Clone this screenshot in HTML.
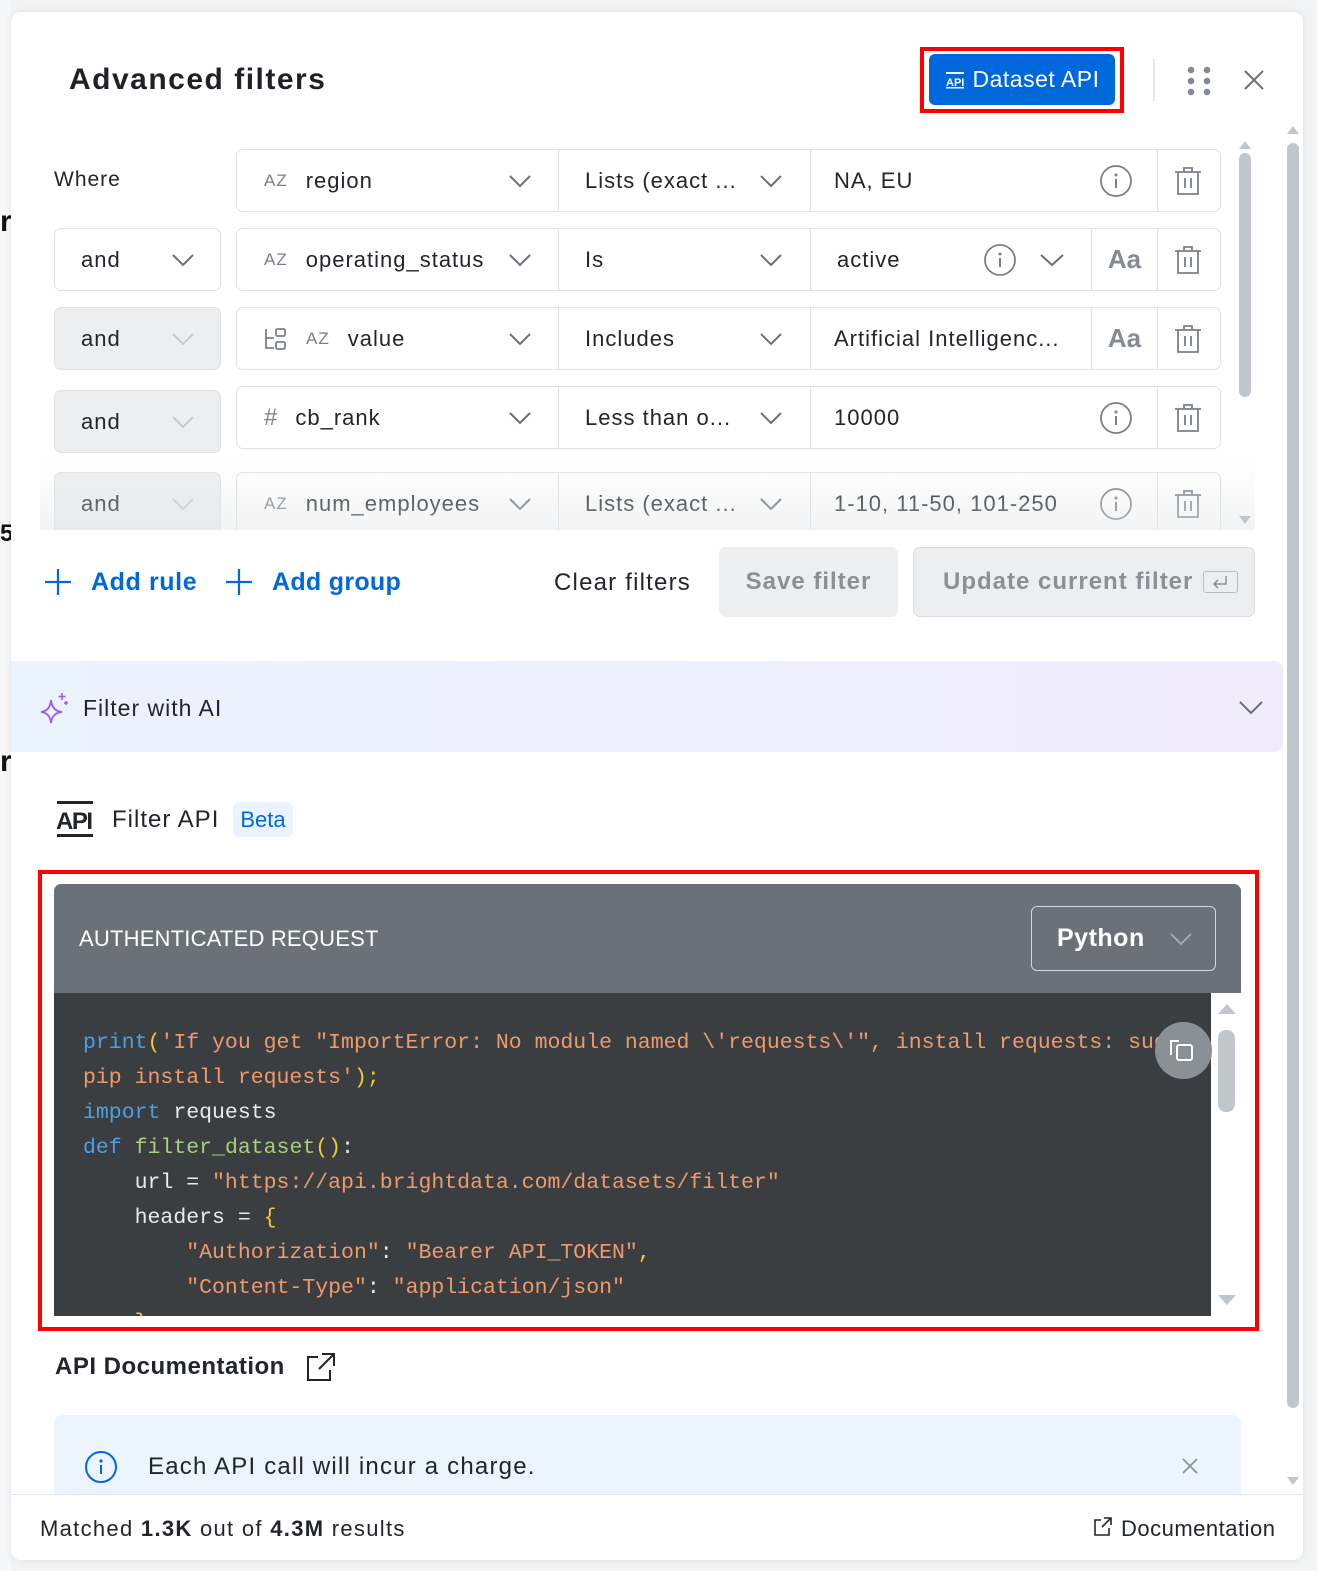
<!DOCTYPE html>
<html><head><meta charset="utf-8">
<style>
*{box-sizing:border-box;margin:0;padding:0}
body{width:1317px;height:1571px;position:relative;overflow:hidden;background:#f2f3f4;font-family:"Liberation Sans",sans-serif;color:#22262a;letter-spacing:1px}
.a{position:absolute}
.modal{left:11px;top:12px;width:1292px;height:1548px;background:#fff;border-radius:10px;box-shadow:0 0 8px rgba(0,0,0,.08);overflow:hidden}
.box{position:absolute;border:1.5px solid #dfe2e5;border-radius:7px;background:#fff}
.gray{background:#eceef0}
.cell{position:absolute;top:0;bottom:0;display:flex;align-items:center;font-size:22px;color:#22262a}
.sep{border-left:1.5px solid #dfe2e5}
.az{font-size:17px;color:#7a8087;letter-spacing:1px;margin-right:18px}
.t{font-size:22px;white-space:nowrap}
.code{font-family:"Liberation Mono",monospace;font-size:21.5px;letter-spacing:0;white-space:pre;color:#e9eaeb;line-height:35px}
.s{color:#ef9a6b}.k{color:#4b9fe6}.f{color:#a8cf7a}.y{color:#f2cb2f}
</style></head><body>
<div class="a" style="left:0;top:0;width:11px;height:1571px;background:#f6f7f8"></div>
<div class="a t" style="left:0;top:205px;font-size:30px;font-weight:bold;color:#111">r</div>
<div class="a t" style="left:0;top:520px;font-size:24px;font-weight:bold;color:#111">5</div>
<div class="a t" style="left:0;top:745px;font-size:30px;font-weight:bold;color:#111">r</div>

<div class="a modal"></div>
<div class="a t" style="left:69px;top:63px;font-size:30px;font-weight:600;color:#1e2226;letter-spacing:1.5px">Advanced filters</div>
<div class="a" style="left:920px;top:47px;width:204px;height:66px;border:4px solid #f00"></div>
<div class="a" style="left:929px;top:54px;width:186px;height:51px;background:#0068dd;border-radius:6px;color:#fff;display:flex;align-items:center;justify-content:center;font-size:23px;letter-spacing:0.5px">
<svg width="20" height="20" viewBox="0 0 20 20" style="margin-right:8px"><rect x="1" y="2" width="18" height="2" fill="#fff"/><text x="1" y="16" font-size="11" font-weight="bold" fill="#fff" font-family="Liberation Sans" letter-spacing="0">API</text><rect x="1" y="17" width="18" height="1.5" fill="#fff"/></svg>Dataset API</div>
<div class="a" style="left:1153px;top:59px;width:2px;height:42px;background:#e3e5e8"></div>
<svg class="a" style="left:1186px;top:66px" width="28" height="30"><g fill="#858b92"><circle cx="5" cy="4" r="3.3"/><circle cx="21" cy="4" r="3.3"/><circle cx="5" cy="15" r="3.3"/><circle cx="21" cy="15" r="3.3"/><circle cx="5" cy="26" r="3.3"/><circle cx="21" cy="26" r="3.3"/></g></svg>
<svg class="a" style="left:1243px;top:69px" width="22" height="22"><path d="M2 2L20 20M20 2L2 20" stroke="#6b7178" stroke-width="2"/></svg>

<div class="a" style="left:40px;top:130px;width:1215px;height:400px;overflow:hidden">
<div class="a" style="left:-40px;top:-130px;width:1317px;height:700px">
<div class="a t" style="left:54px;top:168px;font-size:21px">Where</div>

<div class="box" style="left:54px;top:228px;width:167px;height:63px"></div>
<div class="box gray" style="left:54px;top:307px;width:167px;height:63px"></div>
<div class="box gray" style="left:54px;top:390px;width:167px;height:63px"></div>
<div class="box gray" style="left:54px;top:472px;width:167px;height:63px"></div>
<div class="a t" style="left:81px;top:247px">and</div>
<div class="a t" style="left:81px;top:326px">and</div>
<div class="a t" style="left:81px;top:409px">and</div>
<div class="a t" style="left:81px;top:491px">and</div>
<svg class="a" style="left:171px;top:253px" width="24" height="14"><path d="M2 2L12 12L22 2" fill="none" stroke="#6b7178" stroke-width="2"/></svg>
<svg class="a" style="left:171px;top:332px" width="24" height="14"><path d="M2 2L12 12L22 2" fill="none" stroke="#c6cacf" stroke-width="2"/></svg>
<svg class="a" style="left:171px;top:415px" width="24" height="14"><path d="M2 2L12 12L22 2" fill="none" stroke="#c6cacf" stroke-width="2"/></svg>
<svg class="a" style="left:171px;top:497px" width="24" height="14"><path d="M2 2L12 12L22 2" fill="none" stroke="#c6cacf" stroke-width="2"/></svg>

<div class="box" style="left:236px;top:149px;width:985px;height:63px">
 <div class="cell" style="left:27px"><span class="az">AZ</span>region</div>
 <div class="cell sep" style="left:321px;width:252px;padding-left:26px">Lists (exact ...</div>
 <div class="cell sep" style="left:573px;width:348px;padding-left:23px">NA, EU</div>
 <div class="cell sep" style="left:920px;width:64px"></div>
</div>
<div class="box" style="left:236px;top:228px;width:985px;height:63px">
 <div class="cell" style="left:27px;width:224px;overflow:hidden"><span class="az">AZ</span>operating_status</div>
 <div class="cell sep" style="left:321px;width:252px;padding-left:26px">Is</div>
 <div class="cell sep" style="left:573px;width:282px;padding-left:26px">active</div>
 <div class="cell sep" style="left:854px;width:66px;justify-content:center;font-weight:bold;color:#858b92;font-size:26px;letter-spacing:0">Aa</div>
 <div class="cell sep" style="left:920px;width:64px"></div>
</div>
<div class="box" style="left:236px;top:307px;width:985px;height:63px">
 <div class="cell" style="left:27px"><svg width="24" height="22" style="margin-right:18px"><path d="M2 1V20H10M2 10H10" fill="none" stroke="#7a8087" stroke-width="1.8"/><rect x="12" y="1" width="9" height="7" rx="1.5" fill="none" stroke="#7a8087" stroke-width="1.8"/><rect x="12" y="14" width="9" height="7" rx="1.5" fill="none" stroke="#7a8087" stroke-width="1.8"/></svg><span class="az">AZ</span>value</div>
 <div class="cell sep" style="left:321px;width:252px;padding-left:26px">Includes</div>
 <div class="cell sep" style="left:573px;width:282px;padding-left:23px">Artificial Intelligenc...</div>
 <div class="cell sep" style="left:854px;width:66px;justify-content:center;font-weight:bold;color:#858b92;font-size:26px;letter-spacing:0">Aa</div>
 <div class="cell sep" style="left:920px;width:64px"></div>
</div>
<div class="box" style="left:236px;top:386px;width:985px;height:63px">
 <div class="cell" style="left:27px"><span class="az" style="font-size:24px;letter-spacing:0">#</span>cb_rank</div>
 <div class="cell sep" style="left:321px;width:252px;padding-left:26px">Less than o...</div>
 <div class="cell sep" style="left:573px;width:348px;padding-left:23px">10000</div>
 <div class="cell sep" style="left:920px;width:64px"></div>
</div>
<div class="box" style="left:236px;top:472px;width:985px;height:63px">
 <div class="cell" style="left:27px"><span class="az">AZ</span>num_employees</div>
 <div class="cell sep" style="left:321px;width:252px;padding-left:26px">Lists (exact ...</div>
 <div class="cell sep" style="left:573px;width:348px;padding-left:23px">1-10, 11-50, 101-250</div>
 <div class="cell sep" style="left:920px;width:64px"></div>
</div>

<svg class="a" style="left:508px;top:174px" width="24" height="14"><path d="M2 2L12 12L22 2" fill="none" stroke="#6b7178" stroke-width="2"/></svg>
<svg class="a" style="left:508px;top:253px" width="24" height="14"><path d="M2 2L12 12L22 2" fill="none" stroke="#6b7178" stroke-width="2"/></svg>
<svg class="a" style="left:508px;top:332px" width="24" height="14"><path d="M2 2L12 12L22 2" fill="none" stroke="#6b7178" stroke-width="2"/></svg>
<svg class="a" style="left:508px;top:411px" width="24" height="14"><path d="M2 2L12 12L22 2" fill="none" stroke="#6b7178" stroke-width="2"/></svg>
<svg class="a" style="left:508px;top:497px" width="24" height="14"><path d="M2 2L12 12L22 2" fill="none" stroke="#6b7178" stroke-width="2"/></svg>
<svg class="a" style="left:759px;top:174px" width="24" height="14"><path d="M2 2L12 12L22 2" fill="none" stroke="#6b7178" stroke-width="2"/></svg>
<svg class="a" style="left:759px;top:253px" width="24" height="14"><path d="M2 2L12 12L22 2" fill="none" stroke="#6b7178" stroke-width="2"/></svg>
<svg class="a" style="left:759px;top:332px" width="24" height="14"><path d="M2 2L12 12L22 2" fill="none" stroke="#6b7178" stroke-width="2"/></svg>
<svg class="a" style="left:759px;top:411px" width="24" height="14"><path d="M2 2L12 12L22 2" fill="none" stroke="#6b7178" stroke-width="2"/></svg>
<svg class="a" style="left:759px;top:497px" width="24" height="14"><path d="M2 2L12 12L22 2" fill="none" stroke="#6b7178" stroke-width="2"/></svg>
<svg class="a" style="left:1039px;top:253px" width="26" height="14"><path d="M2 2L13 12L24 2" fill="none" stroke="#6b7178" stroke-width="2"/></svg>

<svg class="a" style="left:1099px;top:164px" width="34" height="34"><circle cx="17" cy="17" r="15" fill="none" stroke="#7a8087" stroke-width="1.8"/><circle cx="17" cy="11" r="1.5" fill="#7a8087"/><path d="M17 15V24" stroke="#7a8087" stroke-width="2"/></svg>
<svg class="a" style="left:983px;top:243px" width="34" height="34"><circle cx="17" cy="17" r="15" fill="none" stroke="#7a8087" stroke-width="1.8"/><circle cx="17" cy="11" r="1.5" fill="#7a8087"/><path d="M17 15V24" stroke="#7a8087" stroke-width="2"/></svg>
<svg class="a" style="left:1099px;top:401px" width="34" height="34"><circle cx="17" cy="17" r="15" fill="none" stroke="#7a8087" stroke-width="1.8"/><circle cx="17" cy="11" r="1.5" fill="#7a8087"/><path d="M17 15V24" stroke="#7a8087" stroke-width="2"/></svg>
<svg class="a" style="left:1099px;top:487px" width="34" height="34"><circle cx="17" cy="17" r="15" fill="none" stroke="#7a8087" stroke-width="1.8"/><circle cx="17" cy="11" r="1.5" fill="#7a8087"/><path d="M17 15V24" stroke="#7a8087" stroke-width="2"/></svg>

<svg class="a" style="left:1174px;top:166px" width="28" height="30"><g fill="none" stroke="#7a8087" stroke-width="1.8"><path d="M1 6H27M10 6V2H18V6M4 6V28H24V6M11 12V22M17 12V22"/></g></svg>
<svg class="a" style="left:1174px;top:245px" width="28" height="30"><g fill="none" stroke="#7a8087" stroke-width="1.8"><path d="M1 6H27M10 6V2H18V6M4 6V28H24V6M11 12V22M17 12V22"/></g></svg>
<svg class="a" style="left:1174px;top:324px" width="28" height="30"><g fill="none" stroke="#7a8087" stroke-width="1.8"><path d="M1 6H27M10 6V2H18V6M4 6V28H24V6M11 12V22M17 12V22"/></g></svg>
<svg class="a" style="left:1174px;top:403px" width="28" height="30"><g fill="none" stroke="#7a8087" stroke-width="1.8"><path d="M1 6H27M10 6V2H18V6M4 6V28H24V6M11 12V22M17 12V22"/></g></svg>
<svg class="a" style="left:1174px;top:489px" width="28" height="30"><g fill="none" stroke="#7a8087" stroke-width="1.8"><path d="M1 6H27M10 6V2H18V6M4 6V28H24V6M11 12V22M17 12V22"/></g></svg>
</div>
<div class="a" style="left:0;top:330px;width:1215px;height:70px;background:linear-gradient(rgba(255,255,255,0),rgba(230,232,234,.5))"></div>
</div>
<svg class="a" style="left:1238px;top:140px" width="14" height="10"><path d="M7 1L13 9H1Z" fill="#c0c6cc"/></svg>
<div class="a" style="left:1239px;top:153px;width:12px;height:244px;background:#c0c6cc;border-radius:6px"></div>
<svg class="a" style="left:1238px;top:515px" width="14" height="10"><path d="M1 1H13L7 9Z" fill="#c0c6cc"/></svg>
<svg class="a" style="left:1286px;top:125px" width="14" height="10"><path d="M7 1L13 9H1Z" fill="#c0c6cc"/></svg>
<div class="a" style="left:1287px;top:143px;width:12px;height:1265px;background:#c0c6cc;border-radius:6px"></div>
<svg class="a" style="left:1286px;top:1476px" width="14" height="10"><path d="M1 1H13L7 9Z" fill="#c0c6cc"/></svg>

<svg class="a" style="left:44px;top:568px" width="28" height="28"><path d="M14 1V27M1 14H27" stroke="#0068dd" stroke-width="2.2"/></svg>
<div class="a t" style="left:91px;top:568px;color:#0068dd;font-size:25px;font-weight:600;letter-spacing:0.6px">Add rule</div>
<svg class="a" style="left:225px;top:568px" width="28" height="28"><path d="M14 1V27M1 14H27" stroke="#0068dd" stroke-width="2.2"/></svg>
<div class="a t" style="left:272px;top:568px;color:#0068dd;font-size:25px;font-weight:600;letter-spacing:0.3px">Add group</div>
<div class="a t" style="left:554px;top:569px;font-size:24px;letter-spacing:1.2px">Clear filters</div>
<div class="a" style="left:719px;top:547px;width:179px;height:70px;background:#eceef0;border-radius:7px;color:#8a9096;font-size:24px;font-weight:600;display:flex;align-items:center;justify-content:center">Save filter</div>
<div class="a" style="left:913px;top:547px;width:342px;height:70px;background:#eceef0;border:1.5px solid #d9dce0;border-radius:7px;color:#8a9096;font-size:24px;font-weight:600;display:flex;align-items:center;padding-left:29px">Update current filter<span style="display:inline-block;margin-left:10px;width:35px;height:22px;border:1.5px solid #b8bdc2;border-radius:3px;position:relative"><svg width="20" height="16" style="position:absolute;left:7px;top:2px"><path d="M15 2V10H4M7 6L3 10L7 14" fill="none" stroke="#8a9096" stroke-width="1.5"/></svg></span></div>

<div class="a" style="left:11px;top:661px;width:1272px;height:91px;background:linear-gradient(90deg,#ebf3fd,#f1ecfb);border-radius:0 8px 8px 0"></div>
<svg class="a" style="left:40px;top:692px" width="30" height="32"><path d="M11 8Q12 19 22 20Q12 21 11 31Q10 21 1 20Q10 19 11 8Z" fill="none" stroke="#9b5cf5" stroke-width="1.8"/><path d="M22 1V8M18.5 4.5H25.5M26 9V13M24 11H28" stroke="#9b5cf5" stroke-width="1.6"/></svg>
<div class="a t" style="left:83px;top:695px;font-size:23px">Filter with AI</div>
<svg class="a" style="left:1238px;top:700px" width="26" height="16"><path d="M2 2L13 13L24 2" fill="none" stroke="#6b7178" stroke-width="2"/></svg>

<svg class="a" style="left:56px;top:801px" width="38" height="38"><rect x="1" y="0" width="36" height="3" fill="#22262a"/><text x="0" y="28" font-family="Liberation Sans" font-weight="bold" font-size="24" fill="#22262a" textLength="37" letter-spacing="0">API</text><rect x="1" y="33" width="36" height="3" fill="#22262a"/></svg>
<div class="a t" style="left:112px;top:806px;font-size:24px">Filter API</div>
<div class="a" style="left:233px;top:802px;width:60px;height:35px;background:#eaf3fe;border-radius:6px;color:#0068dd;font-size:22px;letter-spacing:0;display:flex;align-items:center;justify-content:center">Beta</div>

<div class="a" style="left:38px;top:870px;width:1221px;height:461px;border:4px solid #f00"></div>
<div class="a" style="left:54px;top:884px;width:1187px;height:432px;border-radius:7px 7px 0 0;overflow:hidden;background:#fff">
 <div class="a" style="left:0;top:0;width:1187px;height:109px;background:#6b7178"></div>
 <div class="a t" style="left:25px;top:42px;color:#fff;font-size:22px;letter-spacing:0.2px">AUTHENTICATED REQUEST</div>
 <div class="a" style="left:977px;top:22px;width:185px;height:65px;border:1.5px solid #d4d7da;border-radius:6px;color:#fff;font-size:25px;font-weight:bold;display:flex;align-items:center;padding-left:25px;letter-spacing:0.5px">Python<svg width="24" height="14" style="margin-left:24px"><path d="M2 2L12 12L22 2" fill="none" stroke="#a8adb2" stroke-width="1.8"/></svg></div>
 <div class="a" style="left:0;top:109px;width:1157px;height:323px;background:#3a3e41;overflow:hidden">
  <div class="a code" style="left:29px;top:33px"><span class="k">print</span><span class="y">(</span><span class="s">'If you get "ImportError: No module named \'requests\'", install requests: sudo</span>
<span class="s">pip install requests'</span><span class="y">)</span><span class="y">;</span>
<span class="k">import</span> requests
<span class="k">def</span> <span class="f">filter_dataset</span><span class="y">()</span>:
    url = <span class="s">"https://api.brightdata.com/datasets/filter"</span>
    headers = <span class="y">{</span>
        <span class="s">"Authorization"</span>: <span class="s">"Bearer API_TOKEN"</span><span class="y">,</span>
        <span class="s">"Content-Type"</span>: <span class="s">"application/json"</span>
    <span class="y">}</span></div>
 </div>
 <div class="a" style="left:1101px;top:138px;width:57px;height:57px;border-radius:50%;background:#8a9096"></div>
 <svg class="a" style="left:1114px;top:152px" width="32" height="30"><path d="M11 5H3V19" fill="none" stroke="#fff" stroke-width="2"/><rect x="9" y="9" width="15" height="15" rx="2" fill="none" stroke="#fff" stroke-width="2"/></svg>
 <svg class="a" style="left:1163px;top:119px" width="20" height="12"><path d="M10 1L19 11H1Z" fill="#c0c6cc"/></svg>
 <div class="a" style="left:1164px;top:146px;width:17px;height:82px;background:#c0c6cc;border-radius:8px"></div>
 <svg class="a" style="left:1163px;top:410px" width="20" height="12"><path d="M1 1H19L10 11Z" fill="#c0c6cc"/></svg>
</div>

<div class="a t" style="left:55px;top:1353px;font-size:24px;font-weight:600;letter-spacing:0.5px">API Documentation</div>
<svg class="a" style="left:306px;top:1352px" width="30" height="30"><path d="M12 5H2V28H24V18M16 2H28V14M28 2L13 17" fill="none" stroke="#22262a" stroke-width="2"/></svg>

<div class="a" style="left:54px;top:1415px;width:1187px;height:100px;background:#ecf4fd;border-radius:8px"></div>
<svg class="a" style="left:84px;top:1450px" width="34" height="34"><circle cx="17" cy="17" r="15" fill="none" stroke="#0068dd" stroke-width="2"/><circle cx="17" cy="11" r="1.6" fill="#0068dd"/><path d="M17 15V24" stroke="#0068dd" stroke-width="2"/></svg>
<div class="a t" style="left:148px;top:1453px;font-size:24px;letter-spacing:1.2px">Each API call will incur a charge.</div>
<svg class="a" style="left:1182px;top:1458px" width="16" height="16"><path d="M1 1L15 15M15 1L1 15" stroke="#8a9096" stroke-width="1.6"/></svg>

<div class="a" style="left:11px;top:1494px;width:1292px;height:66px;background:#fff;border-top:1.5px solid #e3e5e8;border-radius:0 0 10px 10px"></div>
<div class="a t" style="left:40px;top:1516px;font-size:22px;letter-spacing:1.3px">Matched <b style="font-weight:600">1.3K</b> out of <b style="font-weight:600">4.3M</b> results</div>
<svg class="a" style="left:1093px;top:1517px" width="20" height="20"><path d="M8 3H2V18H16V11M11 1H18V8M18 1L9 10" fill="none" stroke="#22262a" stroke-width="1.6"/></svg>
<div class="a t" style="left:1121px;top:1516px;font-size:22px;letter-spacing:0.5px">Documentation</div>
</body></html>
